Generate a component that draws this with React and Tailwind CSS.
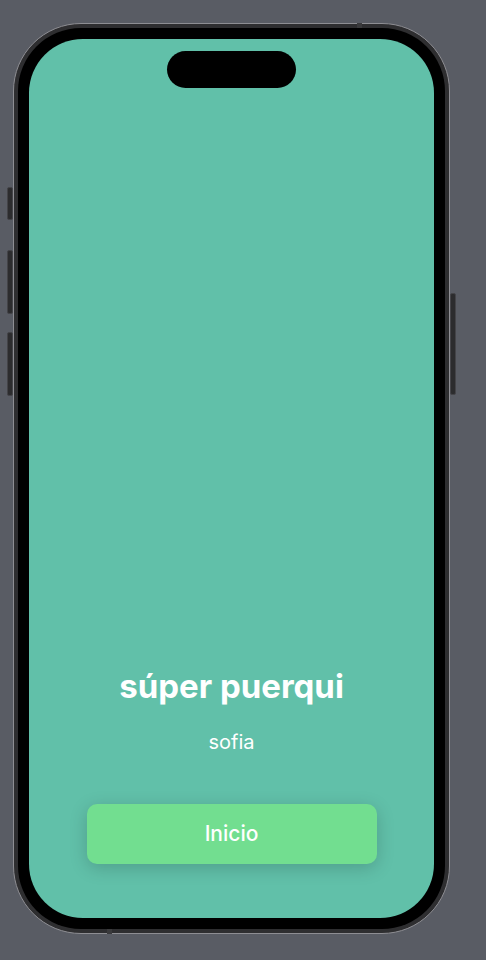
import React from "react";

const font = { fontFamily: "Inter, 'Noto Sans', 'Liberation Sans', sans-serif" };

const SideButton = ({ className }) => (
  <div className={`w-[6px] rounded-[2px] bg-[#2c2c2e] border border-[#444448] ${className}`} />
);

const App = () => {
  return (
    <div className="w-[486px] h-[960px] bg-[#595c64] pt-[23px] pl-[7px] flex overflow-hidden" style={font}>
      {/* left buttons */}
      <div className="w-[6px] flex flex-col pt-[164px]">
        <SideButton className="h-[33px]" />
        <SideButton className="mt-[30px] h-[64px]" />
        <SideButton className="mt-[18px] h-[64px]" />
      </div>

      <div className="w-[437px] h-[911px] rounded-[68px] border border-[#8e8e93] bg-[#2e2e30] p-[4px]">
        <div className="relative w-full h-full rounded-[63px] bg-black p-[11px]">
          <div className="absolute top-[-5px] left-[339px] w-[5px] h-[5px] bg-[#3a3a3c]" />
          <div className="absolute bottom-[-5px] left-[89px] w-[5px] h-[5px] bg-[#3a3a3c]" />

          <div className="w-full h-full rounded-[54px] bg-[#61c0a9] flex flex-col items-center overflow-hidden">
            <div className="mt-[12px] w-[129px] h-[37px] rounded-full bg-black" />

            <div className="flex-1" />

            <h1 className="text-[33px] leading-[40px] font-bold text-white">súper puerqui</h1>
            <p className="mt-[24px] text-[20px] leading-[24px] text-white">sofia</p>

            <button className="mt-[50px] mb-[54px] w-[290px] h-[60px] rounded-[10px] bg-[#72de90] text-white text-[21px] font-medium shadow-[0_4px_18px_rgba(0,0,0,0.18)]">
              Inicio
            </button>
          </div>
        </div>
      </div>

      {/* right button */}
      <div className="w-[6px] pt-[270px]">
        <SideButton className="h-[102px]" />
      </div>
    </div>
  );
};

export default App;
